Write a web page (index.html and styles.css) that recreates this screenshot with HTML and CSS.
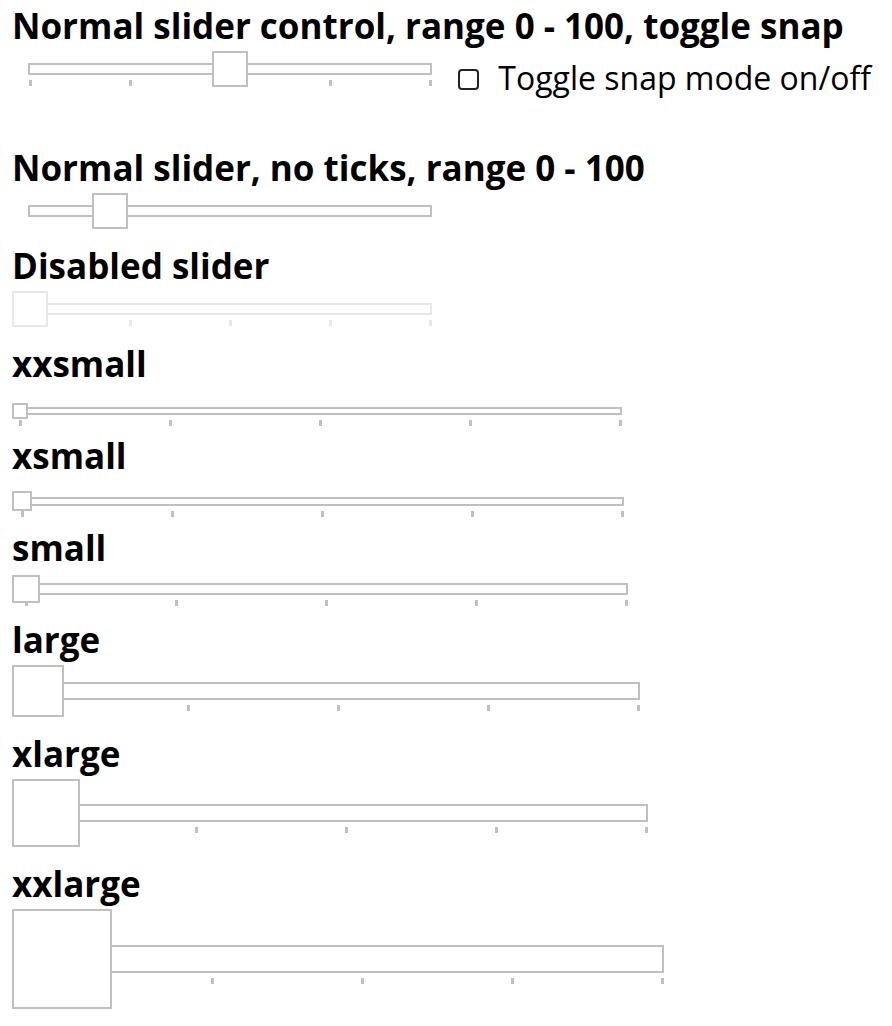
FILE: index.html
```html
<!DOCTYPE html>
<html lang="en">
<head>
<meta charset="utf-8">
<title>Slider demos</title>
<link rel="stylesheet" href="styles.css">
</head>
<body>
<main class="page">

  <section class="demo demo-snap">
    <h2 class="title">Normal slider control, range 0 - 100, toggle snap</h2>
    <div class="row">
      <div class="slider size-normal">
        <div class="rail">
          <div class="track"></div>
          <div class="ticks"><span class="tick"></span><span class="tick"></span><span class="tick"></span><span class="tick"></span><span class="tick"></span></div>
          <div class="thumb" style="left:50%"></div>
        </div>
      </div>
      <label class="toggle"><input type="checkbox" class="check"> Toggle snap mode on/off</label>
    </div>
  </section>

  <section class="demo">
    <h2 class="title">Normal slider, no ticks, range 0 - 100</h2>
    <div class="slider size-normal">
      <div class="rail">
        <div class="track"></div>
        <div class="thumb" style="left:20%"></div>
      </div>
    </div>
  </section>

  <section class="demo">
    <h2 class="title">Disabled slider</h2>
    <div class="slider size-normal is-disabled">
      <div class="rail">
        <div class="track"></div>
        <div class="ticks"><span class="tick"></span><span class="tick"></span><span class="tick"></span><span class="tick"></span><span class="tick"></span></div>
        <div class="thumb" style="left:0%"></div>
      </div>
    </div>
  </section>

  <section class="demo">
    <h2 class="title">xxsmall</h2>
    <div class="slider size-xxsmall">
      <div class="rail">
        <div class="track"></div>
        <div class="ticks"><span class="tick"></span><span class="tick"></span><span class="tick"></span><span class="tick"></span><span class="tick"></span></div>
        <div class="thumb" style="left:0%"></div>
      </div>
    </div>
  </section>

  <section class="demo">
    <h2 class="title">xsmall</h2>
    <div class="slider size-xsmall">
      <div class="rail">
        <div class="track"></div>
        <div class="ticks"><span class="tick"></span><span class="tick"></span><span class="tick"></span><span class="tick"></span><span class="tick"></span></div>
        <div class="thumb" style="left:0%"></div>
      </div>
    </div>
  </section>

  <section class="demo">
    <h2 class="title">small</h2>
    <div class="slider size-small">
      <div class="rail">
        <div class="track"></div>
        <div class="ticks"><span class="tick"></span><span class="tick"></span><span class="tick"></span><span class="tick"></span><span class="tick"></span></div>
        <div class="thumb" style="left:0%"></div>
      </div>
    </div>
  </section>

  <section class="demo">
    <h2 class="title">large</h2>
    <div class="slider size-large">
      <div class="rail">
        <div class="track"></div>
        <div class="ticks"><span class="tick"></span><span class="tick"></span><span class="tick"></span><span class="tick"></span><span class="tick"></span></div>
        <div class="thumb" style="left:0%"></div>
      </div>
    </div>
  </section>

  <section class="demo">
    <h2 class="title">xlarge</h2>
    <div class="slider size-xlarge">
      <div class="rail">
        <div class="track"></div>
        <div class="ticks"><span class="tick"></span><span class="tick"></span><span class="tick"></span><span class="tick"></span><span class="tick"></span></div>
        <div class="thumb" style="left:0%"></div>
      </div>
    </div>
  </section>

  <section class="demo">
    <h2 class="title">xxlarge</h2>
    <div class="slider size-xxlarge">
      <div class="rail">
        <div class="track"></div>
        <div class="ticks"><span class="tick"></span><span class="tick"></span><span class="tick"></span><span class="tick"></span><span class="tick"></span></div>
        <div class="thumb" style="left:0%"></div>
      </div>
    </div>
  </section>

</main>
</body>
</html>
```

FILE: styles.css
```css
html, body {
  margin: 0;
  padding: 0;
  background: #ffffff;
}

body {
  font-family: "Open Sans", "DejaVu Sans", sans-serif;
  color: #000000;
}

.page {
  padding: 4px 12px 0 12px;
  display: flex;
  flex-direction: column;
  gap: 15px;
}

.demo {
  display: flex;
  flex-direction: column;
  gap: 3px;
}

.demo-snap {
  margin-bottom: 31px;
}

.title {
  margin: 0;
  font-size: 35px;
  font-weight: 700;
  line-height: 44px;
  white-space: nowrap;
}

.row {
  display: flex;
  align-items: flex-start;
}

/* ---- slider ---- */
.slider {
  --thumb: 36px;
  --len: 400px;
  --track-h: 12px;
  --line: #c0c0c0;
  display: flex;
  align-items: flex-end;
  min-height: 30px;
  padding-left: calc(var(--thumb) / 2);
  padding-right: calc(var(--thumb) / 2);
  align-self: flex-start;
}

.size-normal  { --thumb: 36px;  --len: 400px; --track-h: 12px; }
.size-xxsmall { --thumb: 16px;  --len: 600px; --track-h: 8px; }
.size-xsmall  { --thumb: 20px;  --len: 600px; --track-h: 9px; }
.size-small   { --thumb: 28px;  --len: 600px; --track-h: 12px; }
.size-large   { --thumb: 52px;  --len: 600px; --track-h: 18px; }
.size-xlarge  { --thumb: 68px;  --len: 600px; --track-h: 18px; }
.size-xxlarge { --thumb: 100px; --len: 600px; --track-h: 28px; }

.is-disabled { --line: #e8e8e8; }

.rail {
  position: relative;
  width: var(--len);
  height: var(--thumb);
  display: flex;
  flex-direction: column;
  justify-content: center;
}

.track {
  margin: 0 -2px;
  height: var(--track-h);
  box-sizing: border-box;
  border: 2px solid var(--line);
  background: #ffffff;
}

.ticks {
  height: 0;
  margin: 5px -1.5px -5px -1.5px;
  display: flex;
  justify-content: space-between;
}

.tick {
  flex: none;
  width: 3px;
  height: 6px;
  background: var(--line);
}

.thumb {
  position: absolute;
  top: 0;
  width: var(--thumb);
  height: var(--thumb);
  margin-left: calc(var(--thumb) / -2);
  box-sizing: border-box;
  border: 2px solid var(--line);
  background: #ffffff;
}

/* ---- toggle ---- */
.toggle {
  margin-left: 10px;
  margin-top: 5px;
  font-size: 32px;
  font-weight: 400;
  line-height: 44px;
  white-space: nowrap;
}

.check {
  appearance: none;
  -webkit-appearance: none;
  margin: 0 11px 0 0;
  width: 21px;
  height: 21px;
  box-sizing: border-box;
  border: 2px solid #222222;
  border-radius: 4px;
  background: #ffffff;
  vertical-align: 0;
}
```
